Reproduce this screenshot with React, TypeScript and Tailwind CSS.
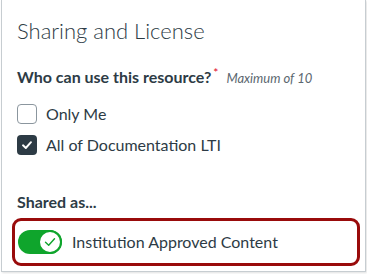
import React from "react"

function CheckRow({ label, checked }: { label: string; checked?: boolean }) {
  return (
    <div className="flex h-[20px] items-center gap-[9px]">
      {checked ? (
        <span className="flex h-[20px] w-[20px] items-center justify-center rounded-[4px] bg-[#2d3b45]">
          <svg width="12" height="12" viewBox="0 0 12 12" fill="none">
            <path d="M2 6.3 L4.8 9 L10 3.2" stroke="#fff" strokeWidth="1.9" strokeLinecap="round" strokeLinejoin="round" />
          </svg>
        </span>
      ) : (
        <span className="h-[20px] w-[20px] rounded-[4px] border border-[#8b969e] bg-white" />
      )}
      <span className="text-[16px] leading-[20px] text-[#2d3b45]">{label}</span>
    </div>
  )
}

export default function App() {
  return (
    <div className="h-[274px] w-[367px] bg-white font-['Lato',sans-serif]">
      <div className="ml-[1px] h-[272px] w-[365px] border-x border-b border-[#c7cdd1] bg-white shadow-[1px_1px_2px_rgba(0,0,0,0.12)]">
        <div className="flex flex-col pl-[15px] pr-[6px]">
          <h2 className="pt-[17px] text-[22px] font-light leading-[28px] text-[#2d3b45]">Sharing and License</h2>

          <div className="mt-[22px] flex items-baseline">
            <span className="text-[16px] font-bold leading-[20px] text-[#2d3b45]">Who can use this resource?</span>
            <span className="relative -top-[6px] ml-[2px] text-[12px] leading-none text-[#e0061f]">*</span>
            <span className="ml-[8px] text-[13px] italic text-[#5b6770]">Maximum of 10</span>
          </div>

          <div className="mt-[15px] flex flex-col gap-[11px]">
            <CheckRow label="Only Me" />
            <CheckRow label="All of Documentation LTI" checked />
          </div>

          <div className="mt-[37px] text-[16px] font-bold leading-[20px] text-[#2d3b45]">Shared as...</div>

          <div className="-ml-[5px] mt-[6px] flex h-[48px] w-[348px] items-center rounded-[9px] border-[3px] border-[#990b0b] pl-[3px]">
            <div className="flex h-[24px] w-[44px] items-center justify-end rounded-full bg-[#0fa52c]">
              <span className="flex h-[24px] w-[24px] items-center justify-center rounded-full border-[2px] border-[#0fa52c] bg-white">
                <svg width="14" height="14" viewBox="0 0 14 14" fill="none">
                  <path d="M2.5 7.2 L5.7 10.2 L11.5 3.8" stroke="#0fa52c" strokeWidth="1.4" strokeLinecap="round" strokeLinejoin="round" />
                </svg>
              </span>
            </div>
            <span className="ml-[10px] text-[16px] leading-[24px] text-[#2d3b45]">Institution Approved Content</span>
          </div>
        </div>
      </div>
    </div>
  )
}
